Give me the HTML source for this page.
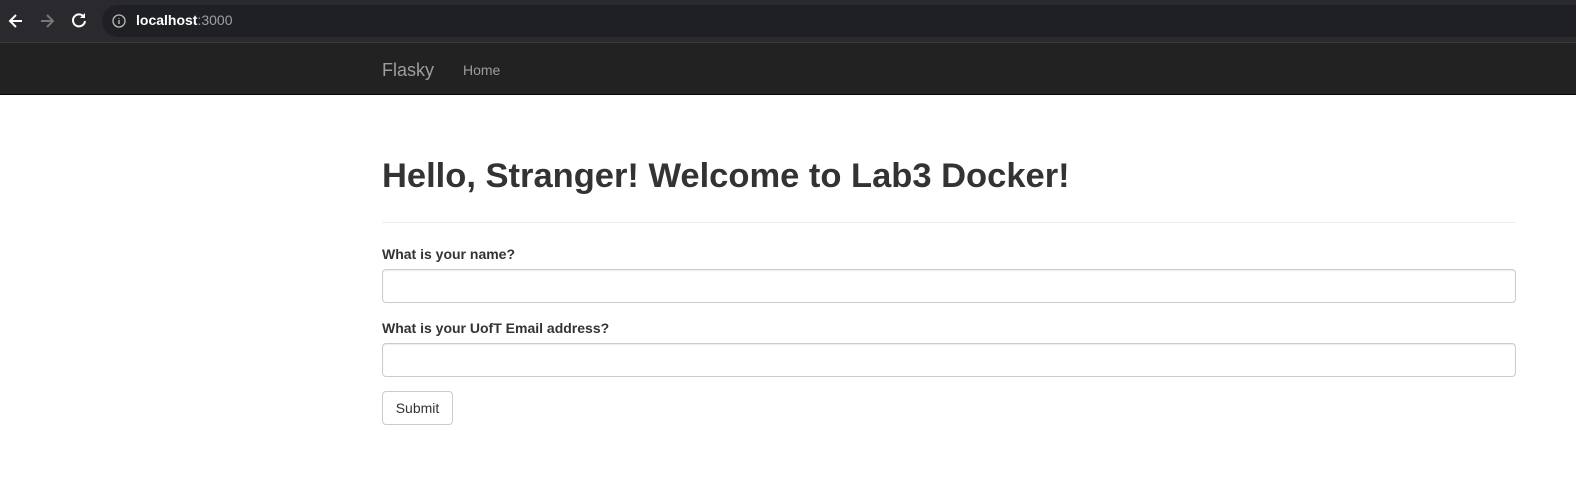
<!DOCTYPE html>
<html><head><meta charset="utf-8"><style>
*{box-sizing:border-box;margin:0;padding:0}
body{width:1576px;height:477px;background:#fff;font-family:"Liberation Sans",Arial,sans-serif;color:#333;overflow:hidden;position:relative}
.chrome{position:absolute;left:0;top:0;width:1576px;height:42px;background:#2a2a2e}
.addr{position:absolute;left:102px;top:5px;right:-20px;height:32px;border-radius:16px;background:#1f2023}
.url{position:absolute;left:136px;top:12px;font-size:14px;color:#fff}
.url b{font-weight:bold}
.url span{color:#9aa0a6}
.nav{position:absolute;left:0;top:42px;width:1576px;height:53px;background:#222;border-top:1px solid #3a3a3a;border-bottom:1px solid #080808}
.brand{position:absolute;left:382px;top:17px;font-size:18px;color:#9d9d9d}
.home{position:absolute;left:463px;top:19px;font-size:14px;color:#9d9d9d}
h1{position:absolute;left:382px;top:154px;font-size:34.5px;font-weight:bold;color:#333;line-height:44px;white-space:nowrap}
hr{position:absolute;left:382px;top:222px;width:1134px;border:0;border-top:1px solid #eee}
label{position:absolute;left:382px;font-size:14px;font-weight:bold;color:#333}
.in{position:absolute;left:382px;width:1134px;height:34px;border:1px solid #ccc;border-radius:4px;box-shadow:inset 0 1px 1px rgba(0,0,0,.075)}
.btn{position:absolute;left:382px;top:391px;width:71px;height:34px;border:1px solid #ccc;border-radius:4px;font-size:14px;text-align:center;line-height:32px;color:#333}
</style></head><body>
<div class="chrome">
<svg style="position:absolute;left:7px;top:12px" width="18" height="18" viewBox="0 0 18 18"><path d="M15 9H3M9 3L3 9l6 6" stroke="#fff" stroke-width="2" fill="none"/></svg>
<svg style="position:absolute;left:38px;top:12px" width="18" height="18" viewBox="0 0 18 18"><path d="M3 9h12M9 3l6 6-6 6" stroke="#777" stroke-width="2" fill="none"/></svg>
<svg style="position:absolute;left:70px;top:11px" width="18" height="18" viewBox="0 0 18 18"><path d="M14 6A6 6 0 1 0 15 10" stroke="#fff" stroke-width="2" fill="none"/><path d="M15 2v5h-5z" fill="#fff"/></svg>
<div class="addr"></div>
<svg style="position:absolute;left:112px;top:14px" width="14" height="14" viewBox="0 0 14 14"><circle cx="7" cy="7" r="6" stroke="#bbb" stroke-width="1.3" fill="none"/><path d="M7 6v4M7 4v.8" stroke="#bbb" stroke-width="1.4"/></svg>
<div class="url"><b>localhost</b><span>:3000</span></div>
</div>
<div class="nav"><div class="brand">Flasky</div><div class="home">Home</div></div>
<h1>Hello, Stranger! Welcome to Lab3 Docker!</h1>
<hr>
<label style="top:246px">What is your name?</label>
<div class="in" style="top:269px"></div>
<label style="top:320px">What is your UofT Email address?</label>
<div class="in" style="top:343px"></div>
<div class="btn">Submit</div>
</body></html>
